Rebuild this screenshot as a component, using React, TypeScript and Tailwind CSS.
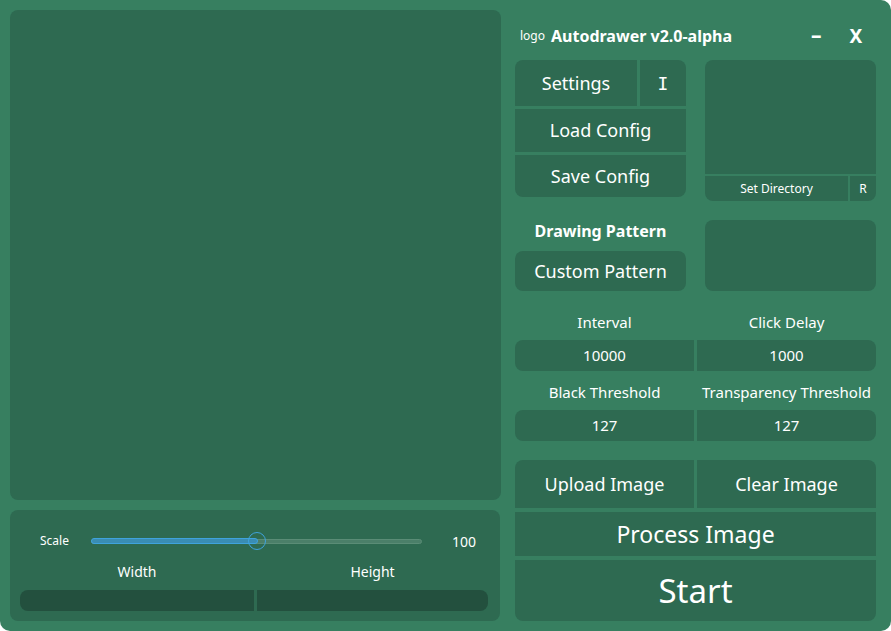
const font = { fontFamily: '"Noto Sans", "Open Sans", sans-serif' };

function Panel({ className = '', children }: { className?: string; children?: React.ReactNode }) {
  return <div className={`bg-[#2e6a51] ${className}`}>{children}</div>;
}

export default function App() {
  return (
    <div className="w-[891px] h-[631px] bg-white" style={font}>
      <div className="w-full h-full bg-[#377f60] rounded-tr-[10px] rounded-b-[10px] flex text-white">
        {/* Left column */}
        <div className="w-[501px] flex flex-col pl-[10px] pt-[10px] gap-[10px]">
          <Panel className="h-[490px] w-[491px] rounded-lg" />
          <Panel className="h-[111px] w-[490px] rounded-lg flex flex-col">
            <div className="flex items-center h-[30px] mt-[16px] pl-[30px]">
              <span className="text-[12px] w-[51px]">Scale</span>
              <div className="relative w-[331px] h-[16px] flex items-center">
                <div className="w-full h-[5px] rounded-full bg-[#4b7f69] border border-[#5a8c76]" />
                <div className="absolute left-0 top-[5px] w-[167px] h-[6px] rounded-full bg-[#3a8db3] border border-[#3fa3dc]" />
                <div className="absolute left-[157px] top-[-1px] w-[18px] h-[18px] rounded-full border border-[#3fa3dc]" />
              </div>
              <span className="text-[14px] ml-[30px]">100</span>
            </div>
            <div className="flex h-[20px] mt-[5px] pl-[10px] pr-[12px] text-[14px]">
              <div className="w-[234px] text-center">Width</div>
              <div className="flex-1 text-center ml-[3px]">Height</div>
            </div>
            <div className="flex h-[21px] mt-[9px] pl-[10px] pr-[12px] gap-[3px]">
              <div className="w-[234px] h-full bg-[#23503e] rounded-l-lg" />
              <div className="flex-1 h-full bg-[#23503e] rounded-r-lg" />
            </div>
          </Panel>
        </div>

        {/* Right column */}
        <div className="w-[361px] ml-[14px] pt-[10px] flex flex-col">
          <div className="h-[50px] flex items-center pt-[2px]">
            <span className="text-[12px] ml-[5px]">logo</span>
            <span className="text-[16px] font-bold ml-[6px]">Autodrawer v2.0-alpha</span>
            <span className="text-[21px] font-bold ml-[79px]">–</span>
            <span className="text-[19px] font-bold ml-[28px]">X</span>
          </div>

          <div className="flex h-[141px] gap-[19px]">
            <div className="w-[171px] h-[137px] rounded-lg overflow-hidden flex flex-col gap-[3px] text-[18px]">
              <div className="h-[46px] flex gap-[3px]">
                <Panel className="w-[122px] flex items-center justify-center">Settings</Panel>
                <Panel className="flex-1 flex items-center justify-center">
                  <span style={{ fontFamily: '"DejaVu Sans Mono", monospace' }}>I</span>
                </Panel>
              </div>
              <Panel className="h-[43px] flex items-center justify-center">Load Config</Panel>
              <Panel className="flex-1 flex items-center justify-center">Save Config</Panel>
            </div>
            <div className="w-[171px] h-[141px] rounded-lg overflow-hidden flex flex-col gap-[2px]">
              <Panel className="h-[114px]" />
              <div className="flex-1 flex gap-[2px] text-[12px]">
                <Panel className="w-[143px] flex items-center justify-center">Set Directory</Panel>
                <Panel className="flex-1 flex items-center justify-center">R</Panel>
              </div>
            </div>
          </div>

          <div className="flex mt-[19px] gap-[19px]">
            <div className="w-[171px] flex flex-col">
              <div className="h-[22px] mb-[9px] text-[16px] font-bold flex items-center justify-center">Drawing Pattern</div>
              <Panel className="h-[40px] rounded-lg flex items-center justify-center text-[18px]">Custom Pattern</Panel>
            </div>
            <Panel className="w-[171px] h-[71px] rounded-lg" />
          </div>

          <div className="flex mt-[17px] h-[32px] text-[15px] leading-[28px]">
            <div className="w-[179px] text-center">Interval</div>
            <div className="flex-1 text-center ml-[3px]">Click Delay</div>
          </div>
          <div className="flex h-[31px] gap-[3px] text-[15px]">
            <Panel className="w-[179px] rounded-l-lg flex items-center justify-center">10000</Panel>
            <Panel className="flex-1 rounded-r-lg flex items-center justify-center">1000</Panel>
          </div>
          <div className="flex mt-[7px] h-[32px] text-[15px] leading-[28px]">
            <div className="w-[179px] text-center">Black Threshold</div>
            <div className="flex-1 text-center ml-[3px]">Transparency Threshold</div>
          </div>
          <div className="flex h-[31px] gap-[3px] text-[15px]">
            <Panel className="w-[179px] rounded-l-lg flex items-center justify-center">127</Panel>
            <Panel className="flex-1 rounded-r-lg flex items-center justify-center">127</Panel>
          </div>

          <div className="mt-[19px] h-[161px] rounded-lg overflow-hidden flex flex-col gap-[4px]">
            <div className="h-[48px] flex gap-[3px] text-[18px]">
              <Panel className="w-[179px] flex items-center justify-center">Upload Image</Panel>
              <Panel className="flex-1 flex items-center justify-center">Clear Image</Panel>
            </div>
            <Panel className="h-[44px] flex items-center justify-center text-[23px]">Process Image</Panel>
            <Panel className="flex-1 flex items-center justify-center text-[33px]">Start</Panel>
          </div>
        </div>
      </div>
    </div>
  );
}
